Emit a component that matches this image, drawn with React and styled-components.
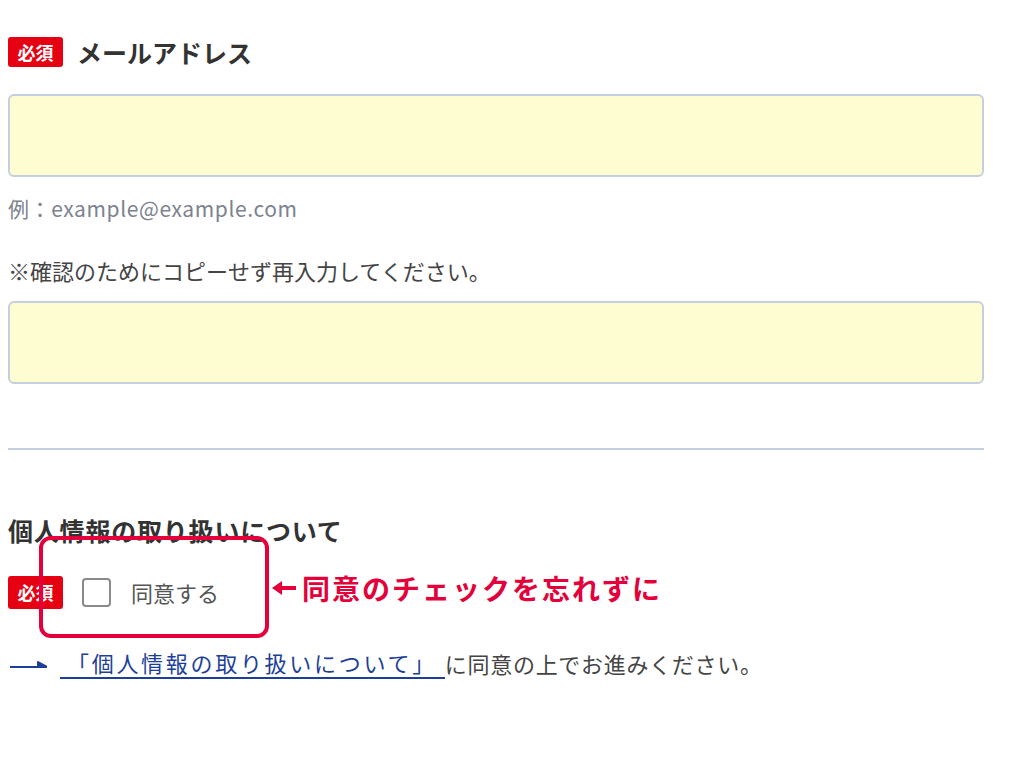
import React from 'react'
import styled, { createGlobalStyle } from 'styled-components'

const Global = createGlobalStyle`
  body {
    margin: 0;
    background: #fff;
    font-family: "Noto Sans CJK JP", "Noto Sans", sans-serif;
    color: #333;
  }
`

const Page = styled.div`
  width: 976px;
  padding: 37px 40px 80px 8px;
`

const LabelRow = styled.div`
  display: flex;
  align-items: center;
  gap: 14px;
  height: 30px;
`

const Badge = styled.span`
  display: inline-flex;
  align-items: center;
  justify-content: center;
  width: 55px;
  height: ${p => p.tall ? 33 : 30}px;
  background: #e50012;
  color: #fff;
  font-weight: 700;
  font-size: 18px;
  border-radius: 3px;
  flex-shrink: 0;
`

const Label = styled.span`
  font-size: 25px;
  font-weight: 700;
  color: #333;
`

const Field = styled.input`
  display: block;
  box-sizing: border-box;
  width: 100%;
  height: 83px;
  margin-top: ${p => p.top}px;
  background: #fefcd1;
  border: 2px solid #c5cfe0;
  border-radius: 6px;
  outline: none;
`

const Hint = styled.p`
  margin: 17px 0 0;
  font-size: 21px;
  line-height: 28px;
  letter-spacing: 0.6px;
  color: #7d828f;
`

const Note = styled.p`
  margin: 34px 0 0;
  font-size: 22px;
  line-height: 28px;
  color: #444;
`

const Divider = styled.hr`
  margin: 64px 0 0;
  border: 0;
  height: 2px;
  background: #c5cfe0;
`

const Heading = styled.h3`
  margin: 64px 0 0;
  font-size: 25px;
  line-height: 32px;
  font-weight: 700;
  letter-spacing: 0.8px;
  color: #333;
`

const AgreeRow = styled.div`
  position: relative;
  display: flex;
  align-items: center;
  height: 36px;
  margin-top: 28px;
`

const Box = styled.span`
  box-sizing: border-box;
  width: 29px;
  height: 29px;
  margin-left: 19px;
  border: 2px solid #8a8a8a;
  border-radius: 4px;
  background: #fff;
`

const AgreeText = styled.span`
  margin-left: 20px;
  font-size: 22px;
  color: #555;
`

const Frame = styled.div`
  position: absolute;
  left: 31px;
  top: -38px;
  width: 230px;
  height: 102px;
  box-sizing: border-box;
  border: 4px solid #e4003b;
  border-radius: 12px;
  pointer-events: none;
`

const Callout = styled.div`
  position: absolute;
  left: 264px;
  top: -6px;
  display: flex;
  align-items: center;
  gap: 6px;
  color: #e4003b;
  font-size: 28px;
  font-weight: 700;
  letter-spacing: 2px;
  white-space: nowrap;
`

const LinkRow = styled.div`
  display: flex;
  align-items: center;
  margin-top: 37px;
  font-size: 22px;
  line-height: 32px;
  color: #444;
`

const Link = styled.a`
  margin-left: 13px;
  padding: 0 8px 0 7px;
  color: #1d3f99;
  letter-spacing: 2.7px;
  text-decoration: none;
  border-bottom: 2px solid #1d3f99;
  line-height: 30px;
`

const After = styled.span`
  letter-spacing: 0.7px;
`

export default function App() {
  return (
    <Page>
      <Global />
      <LabelRow>
        <Badge>必須</Badge>
        <Label>メールアドレス</Label>
      </LabelRow>
      <Field top={27} />
      <Hint>例：example@example.com</Hint>
      <Note>※確認のためにコピーせず再入力してください。</Note>
      <Field top={17} />
      <Divider />
      <Heading>個人情報の取り扱いについて</Heading>
      <AgreeRow>
        <Badge tall>必須</Badge>
        <Box />
        <AgreeText>同意する</AgreeText>
        <Frame />
        <Callout>
          <svg width="24" height="14" viewBox="0 0 24 14">
            <path d="M0 7 L10 0 L10 5 L24 5 L24 9 L10 9 L10 14 Z" fill="#e4003b" />
          </svg>
          同意のチェックを忘れずに
        </Callout>
      </AgreeRow>
      <LinkRow>
        <svg width="37" height="14" viewBox="0 0 37 14" style={{ marginLeft: 2 }}>
          <path d="M0 11 H37 L28 6 L28 11" fill="#1d3f99" stroke="#1d3f99" strokeWidth="2" strokeLinejoin="round" />
        </svg>
        <Link href="#">「個人情報の取り扱いについて」</Link>
        <After>に同意の上でお進みください。</After>
      </LinkRow>
    </Page>
  )
}
